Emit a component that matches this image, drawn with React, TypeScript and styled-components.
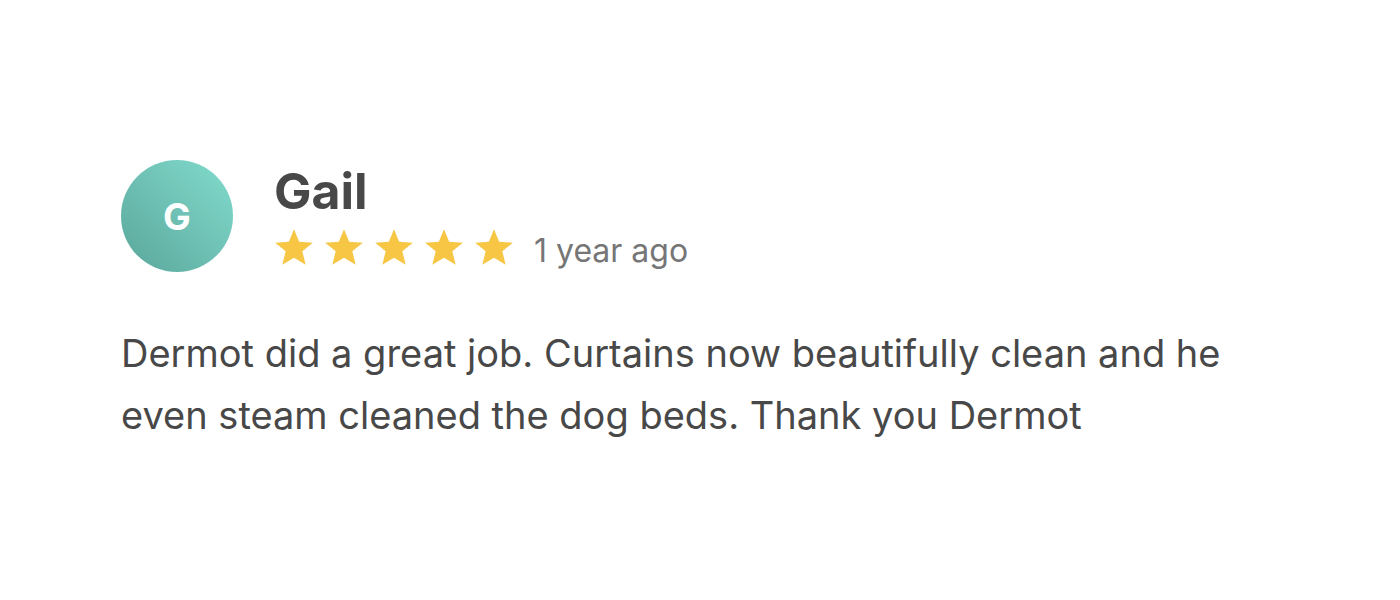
import React from "react";
import styled, { createGlobalStyle } from "styled-components";

const GlobalStyle = createGlobalStyle`
  html, body {
    margin: 0;
    padding: 0;
    background: #fff;
  }
  body {
    font-family: Inter, "Liberation Sans", sans-serif;
    -webkit-font-smoothing: antialiased;
  }
`;

const Page = styled.div`
  width: 1400px;
  height: 600px;
  box-sizing: border-box;
  padding: 160px 121px 0;
`;

const Header = styled.div`
  display: flex;
  align-items: center;
  gap: 41px;
`;

const Avatar = styled.div`
  width: 112px;
  height: 112px;
  border-radius: 50%;
  flex: none;
  display: flex;
  align-items: center;
  justify-content: center;
  background: linear-gradient(45deg, #5aa69b 0%, #82dccd 100%);
  color: #fff;
  font-weight: 700;
  font-size: 37px;
`;

const Meta = styled.div`
  display: flex;
  flex-direction: column;
`;

const Name = styled.div`
  color: #484848;
  font-weight: 700;
  font-size: 50px;
  line-height: 56px;
`;

const RatingRow = styled.div`
  display: flex;
  align-items: flex-start;
  margin-top: 9px;
`;

const Stars = styled.div`
  display: flex;
  gap: 10px;
`;

const Ago = styled.span`
  margin-left: 20px;
  padding-top: 3px;
  color: #767676;
  font-size: 32px;
  line-height: 39px;
`;

const Body = styled.p`
  margin: 50px 0 0;
  color: #484848;
  font-size: 38px;
  line-height: 62px;
  max-width: 1140px;
`;

const Star = () => (
  <svg width="40" height="39" viewBox="0 0 24 23" aria-hidden="true">
    <polygon
      fill="#f6c644"
      points="12,0.6 15.1,8 23.3,8.6 17,13.8 19,21.9 12,17.6 5,21.9 7,13.8 0.7,8.6 8.9,8"
    />
  </svg>
);

export default function App() {
  return (
    <>
      <GlobalStyle />
      <Page>
        <Header>
          <Avatar>G</Avatar>
          <Meta>
            <Name>Gail</Name>
            <RatingRow>
              <Stars>
                {[0, 1, 2, 3, 4].map((i) => (
                  <Star key={i} />
                ))}
              </Stars>
              <Ago>1 year ago</Ago>
            </RatingRow>
          </Meta>
        </Header>
        <Body>
          Dermot did a great job. Curtains now beautifully clean and he even
          steam cleaned the dog beds. Thank you Dermot
        </Body>
      </Page>
    </>
  );
}
